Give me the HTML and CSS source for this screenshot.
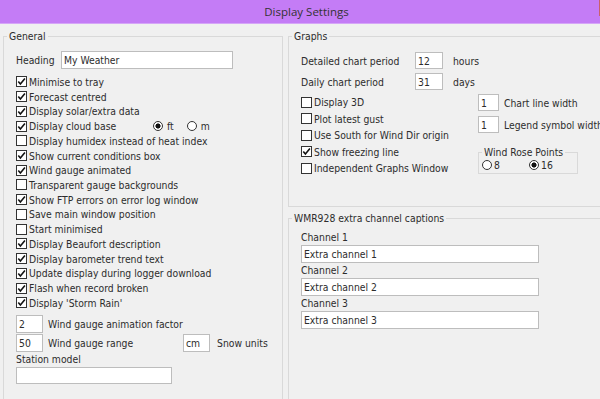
FILE: index.html
```html
<!DOCTYPE html>
<html lang="en">
<head>
    <meta charset="UTF-8">
    <title>Display Settings</title>
    <link rel="stylesheet" href="styles.css">
</head>
<body>
    <div class="titlebar">
        <span class="title">Display Settings</span>
        <span class="close-edge"></span>
    </div>

    <div class="content">
        <!-- General -->
        <fieldset class="group general">
            <legend>General</legend>
            <div class="group-body">
                <div class="heading-row">
                    <label for="heading">Heading</label>
                    <input id="heading" class="field heading-input" type="text" value="My Weather">
                </div>

                <div class="checks">
                    <div class="check"><span class="box"><svg viewBox="0 0 9 9"><path d="M1.3 4.4 3.4 6.9 7.9 1.6"/></svg></span>Minimise to tray</div>
                    <div class="check"><span class="box"><svg viewBox="0 0 9 9"><path d="M1.3 4.4 3.4 6.9 7.9 1.6"/></svg></span>Forecast centred</div>
                    <div class="check"><span class="box"><svg viewBox="0 0 9 9"><path d="M1.3 4.4 3.4 6.9 7.9 1.6"/></svg></span>Display solar/extra data</div>
                    <div class="check">
                        <span class="box"><svg viewBox="0 0 9 9"><path d="M1.3 4.4 3.4 6.9 7.9 1.6"/></svg></span>
                        <span class="cloud-label">Display cloud base</span>
                        <span class="radio on"></span><span class="radio-text">ft</span>
                        <span class="radio"></span><span class="radio-text">m</span>
                    </div>
                    <div class="check"><span class="box"></span>Display humidex instead of heat index</div>
                    <div class="check"><span class="box"><svg viewBox="0 0 9 9"><path d="M1.3 4.4 3.4 6.9 7.9 1.6"/></svg></span>Show current conditions box</div>
                    <div class="check"><span class="box"><svg viewBox="0 0 9 9"><path d="M1.3 4.4 3.4 6.9 7.9 1.6"/></svg></span>Wind gauge animated</div>
                    <div class="check"><span class="box"></span>Transparent gauge backgrounds</div>
                    <div class="check"><span class="box"><svg viewBox="0 0 9 9"><path d="M1.3 4.4 3.4 6.9 7.9 1.6"/></svg></span>Show FTP errors on error log window</div>
                    <div class="check"><span class="box"></span>Save main window position</div>
                    <div class="check"><span class="box"></span>Start minimised</div>
                    <div class="check"><span class="box"><svg viewBox="0 0 9 9"><path d="M1.3 4.4 3.4 6.9 7.9 1.6"/></svg></span>Display Beaufort description</div>
                    <div class="check"><span class="box"><svg viewBox="0 0 9 9"><path d="M1.3 4.4 3.4 6.9 7.9 1.6"/></svg></span>Display barometer trend text</div>
                    <div class="check"><span class="box"><svg viewBox="0 0 9 9"><path d="M1.3 4.4 3.4 6.9 7.9 1.6"/></svg></span>Update display during logger download</div>
                    <div class="check"><span class="box"><svg viewBox="0 0 9 9"><path d="M1.3 4.4 3.4 6.9 7.9 1.6"/></svg></span>Flash when record broken</div>
                    <div class="check"><span class="box"><svg viewBox="0 0 9 9"><path d="M1.3 4.4 3.4 6.9 7.9 1.6"/></svg></span>Display 'Storm Rain'</div>
                </div>

                <div class="num-row first">
                    <input class="field small" type="text" value="2">
                    <span>Wind gauge animation factor</span>
                </div>
                <div class="num-row">
                    <input class="field small" type="text" value="50">
                    <span class="range-label">Wind gauge range</span>
                    <input class="field small" type="text" value="cm">
                    <span class="snow">Snow units</span>
                </div>
                <div class="station-label">Station model</div>
                <input class="field station-input" type="text" value="">
            </div>
        </fieldset>

        <div class="right-col">
            <!-- Graphs -->
            <fieldset class="group graphs">
                <legend>Graphs</legend>
                <div class="group-body">
                    <div class="period-row">
                        <label>Detailed chart period</label>
                        <input class="field period" type="text" value="12">
                        <span class="unit">hours</span>
                    </div>
                    <div class="period-row">
                        <label>Daily chart period</label>
                        <input class="field period" type="text" value="31">
                        <span class="unit">days</span>
                    </div>

                    <div class="graph-grid">
                        <div class="graph-checks">
                            <div class="check tall"><span class="box"></span>Display 3D</div>
                            <div class="check tall"><span class="box"></span>Plot latest gust</div>
                            <div class="check tall"><span class="box"></span>Use South for Wind Dir origin</div>
                            <div class="check tall"><span class="box"><svg viewBox="0 0 9 9"><path d="M1.3 4.4 3.4 6.9 7.9 1.6"/></svg></span>Show freezing line</div>
                            <div class="check tall"><span class="box"></span>Independent Graphs Window</div>
                        </div>
                        <div class="graph-side">
                            <div class="side-row">
                                <input class="field tiny" type="text" value="1">
                                <span>Chart line width</span>
                            </div>
                            <div class="side-row">
                                <input class="field tiny" type="text" value="1">
                                <span>Legend symbol width</span>
                            </div>
                            <fieldset class="group rose">
                                <legend>Wind Rose Points</legend>
                                <div class="rose-body">
                                    <span class="rose-opt"><span class="radio"></span>8</span>
                                    <span class="rose-opt"><span class="radio on"></span>16</span>
                                </div>
                            </fieldset>
                        </div>
                    </div>
                </div>
            </fieldset>

            <!-- WMR928 -->
            <fieldset class="group wmr">
                <legend>WMR928 extra channel captions</legend>
                <div class="group-body">
                    <div class="channel-label">Channel 1</div>
                    <input class="field channel" type="text" value="Extra channel 1">
                    <div class="channel-label">Channel 2</div>
                    <input class="field channel" type="text" value="Extra channel 2">
                    <div class="channel-label">Channel 3</div>
                    <input class="field channel" type="text" value="Extra channel 3">
                </div>
            </fieldset>
        </div>
    </div>
</body>
</html>
```

FILE: styles.css
```css
* {
    box-sizing: border-box;
}
html, body {
    margin: 0;
    overflow: hidden;
}
body {
    width: 600px;
    height: 399px;
    background: #f0f0f0;
    font-family: "DejaVu Sans Condensed", "DejaVu Sans", sans-serif;
    font-size: 10.3px;
    color: #2c2c2c;
}

.titlebar {
    position: relative;
    height: 24px;
    padding-left: 13px;
    background: #c47cf6;
    border-bottom: 1px solid #d6a6f8;
    display: flex;
    align-items: center;
    justify-content: center;
}
.title {
    font-family: "Open Sans", "Noto Sans", sans-serif;
    font-size: 11.5px;
    color: #333;
}
.close-edge {
    position: absolute;
    right: 0;
    top: 0;
    width: 1px;
    height: 16px;
    background: #c9606a;
}

.content {
    display: flex;
    gap: 5px;
    padding: 5px 0 0 3px;
}

.group {
    margin: 0;
    padding: 0;
    min-width: 0;
    border: 1px solid #d9d9d9;
}
.group legend {
    margin-left: 3px;
    padding: 0 2px;
    line-height: 14px;
}
.group-body {
    padding: 8px 0 0 12px;
}

.field {
    height: 18px;
    margin: 0;
    padding: 0 2px;
    border: 1px solid #bdbdbd;
    background: #fff;
    font: inherit;
    color: inherit;
    outline: none;
}

/* checkboxes and radios */
.check {
    display: flex;
    align-items: center;
    gap: 2px;
    height: 14.73px;
    white-space: nowrap;
}
.check.tall {
    height: 16.5px;
}
.box {
    flex: none;
    width: 11px;
    height: 11px;
    border: 1px solid #333;
    background: #fff;
    display: flex;
    align-items: center;
    justify-content: center;
}
.box svg {
    width: 9px;
    height: 9px;
}
.box path {
    fill: none;
    stroke: #111;
    stroke-width: 1.6;
}
.radio {
    flex: none;
    width: 10px;
    height: 10px;
    border: 1px solid #333;
    border-radius: 50%;
    background: #fff;
}
.radio.on {
    background: radial-gradient(circle, #111 0 2.3px, #fff 2.8px);
}
.radio-text {
    margin: 0 11px 0 2px;
}

/* General */
.general {
    flex: none;
    width: 280px;
    height: 380px;
}
.heading-row {
    display: flex;
    align-items: center;
    height: 18px;
}
.heading-row label {
    width: 45px;
}
.heading-input {
    width: 172px;
}
.checks {
    margin-top: 5.6px;
}
.cloud-label {
    width: 122px;
}
.num-row {
    display: flex;
    align-items: center;
    gap: 5px;
    height: 18px;
    margin-top: 1px;
}
.num-row.first {
    margin-top: 4.7px;
}
.small {
    width: 27px;
}
.range-label {
    width: 130px;
}
.snow {
    margin-left: 2px;
}
.station-label {
    line-height: 15px;
}
.station-input {
    display: block;
    width: 156px;
    height: 17px;
}

/* Graphs */
.right-col {
    flex: none;
    width: 330px;
}
.graphs {
    height: 178px;
}
.graphs .group-body {
    padding-top: 9px;
}
.period-row {
    display: flex;
    align-items: center;
    height: 17px;
    margin-bottom: 4px;
}
.period-row label {
    width: 114px;
}
.period {
    width: 28px;
    height: 17px;
}
.unit {
    margin-left: 10px;
}
.graph-grid {
    display: grid;
    grid-template-columns: 177px auto;
}
.side-row {
    display: flex;
    align-items: center;
    gap: 5px;
    height: 17px;
    margin-bottom: 5px;
    white-space: nowrap;
}
.tiny {
    width: 21px;
    height: 17px;
}
.rose {
    width: 100px;
    margin-top: 13px;
}
.rose legend {
    line-height: 12px;
}
.rose-body {
    display: flex;
    align-items: center;
    height: 15px;
    padding: 0 0 2px 3px;
}
.rose-opt {
    display: flex;
    align-items: center;
    gap: 2px;
    width: 47px;
}

/* WMR928 */
.wmr {
    margin-top: 4px;
    height: 200px;
}
.wmr .group-body {
    padding-top: 5px;
}
.channel-label {
    line-height: 15px;
}
.channel {
    display: block;
    width: 238px;
}
```
